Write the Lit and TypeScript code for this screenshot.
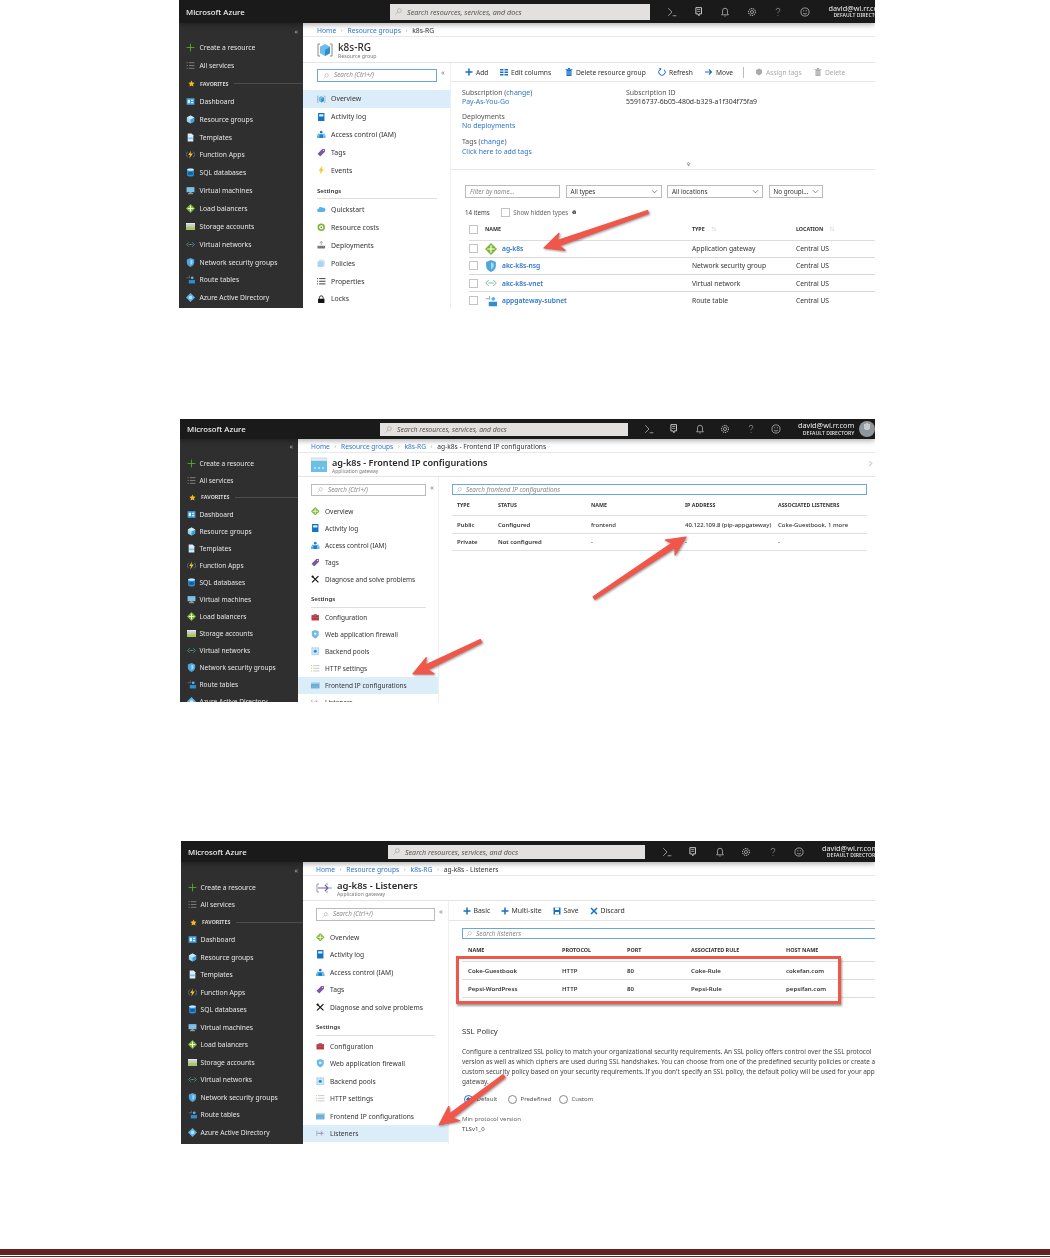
import { LitElement, html, css, svg, nothing } from "lit";
import { customElement, property } from "lit/decorators.js";

const ICONS: Record<string, any> = {
  plus: svg`<path d="M8 1v14M1 8h14" stroke="#5db82c" stroke-width="1.4" fill="none"/>`,
  list: svg`<path d="M1 3h2M1 8h2M1 13h2" stroke="#8a8a8a" stroke-width="1.5"/><path d="M5 3h10M5 8h10M5 13h10" stroke="#8a8a8a" stroke-width="1.5"/>`,
  star: svg`<path d="M8 1l2.2 4.6 5 .7-3.6 3.5.9 5L8 12.4l-4.5 2.4.9-5L.8 6.3l5-.7z" fill="#f5b921"/>`,
  dash: svg`<rect x="1" y="2" width="14" height="12" fill="#3b9ad9"/><path d="M3 5h4v6H3zM9 5h4v2H9zM9 9h4v2H9z" fill="#e8f4fc"/>`,
  cube: svg`<path d="M8 1l6.5 3.5v7L8 15l-6.5-3.5v-7z" fill="#9fd6ef"/><path d="M8 8l6.5-3.5v7L8 15z" fill="#3e9fd8"/><path d="M8 8L1.500 4.500 8 1l6.500 3.500z" fill="#c6e9f8"/>`,
  cubeo: svg`<path d="M3 2H1v12h2M13 2h2v12h-2" stroke="#8a8a8a" fill="none"/><path d="M8 2l5 2.800v6.400L8 14l-5-2.800V4.800z" fill="#6dbde8"/><path d="M8 8l5-3.200v6.400L8 14z" fill="#2f8fce"/>`,
  doc: svg`<path d="M3 1h7l3 3v11H3z" fill="#d9eefa"/><path d="M4 8h8v3H4z" fill="#7fc0e8"/>`,
  fn: svg`<path d="M3 3L0 8l3 5M13 3l3 5-3 5" stroke="#5aa6dc" fill="none"/><path d="M9 1L4 9h3l-1 6 6-9H8z" fill="#f7c325"/>`,
  sql: svg`<path d="M2 3c0-3 12-3 12 0v10c0 3-12 3-12 0z" fill="#2f8ed0"/><ellipse cx="8" cy="3" rx="6" ry="2" fill="#cfe9f8"/><rect x="4" y="7" width="8" height="5" fill="#0f5f9e"/>`,
  vm: svg`<rect x="1" y="2" width="14" height="9" fill="#7cc0e6"/><rect x="6" y="11" width="4" height="2" fill="#aaa"/><rect x="3.500" y="13" width="9" height="1.500" fill="#bbb"/>`,
  lb: svg`<path d="M8 0l8 8-8 8-8-8z" fill="#7cb82f"/><path d="M8 3v10M3 8h10" stroke="#fff" stroke-width="1.600"/>`,
  storage: svg`<rect x="0" y="2" width="16" height="12" fill="#c7c7c7"/><rect x="0" y="9" width="16" height="5" fill="#a8c956"/><rect x="0" y="2" width="16" height="2" fill="#eee"/>`,
  vnet: svg`<path d="M5 4L1 8l4 4M11 4l4 4-4 4" stroke="#55aee0" stroke-width="1.200" fill="none"/><circle cx="5.500" cy="8" r="1" fill="#7cc040"/><circle cx="8" cy="8" r="1" fill="#7cc040"/><circle cx="10.500" cy="8" r="1" fill="#7cc040"/>`,
  shield: svg`<path d="M8 0l6.500 2.500V8c0 4-3 6.500-6.500 8-3.500-1.500-6.500-4-6.500-8V2.500z" fill="#4ea6dc"/><path d="M8 3l3.500 1.500V8c0 2-1.500 3.500-3.500 4.500z" fill="#a9d9f3"/>`,
  route: svg`<path d="M1 5h5M6 1v5" stroke="#888" fill="none"/><circle cx="11" cy="5" r="2.500" fill="#59b4e6"/><path d="M5 15V9h11v6z" fill="#2f8ed0"/>`,
  aad: svg`<path d="M8 0l8 8-8 8-8-8z" fill="#5db3e8"/><circle cx="8" cy="8" r="3" fill="#bfe4fa"/>`,
  book: svg`<rect x="2" y="0" width="12" height="16" fill="#1373c4"/><rect x="4" y="2.500" width="8" height="4" fill="#e8f4fc"/>`,
  iam: svg`<circle cx="8" cy="4" r="2.500" fill="#1d7fc9"/><path d="M4 15V8h8v7z" fill="#1d7fc9"/><circle cx="3" cy="8" r="1.600" fill="#59b4e6"/><path d="M0 15v-5h4v5z" fill="#59b4e6"/><circle cx="13" cy="8" r="1.600" fill="#59b4e6"/><path d="M12 15v-5h4v5z" fill="#59b4e6"/>`,
  tag: svg`<path d="M1 11L10 2h5v5l-9 9z" fill="#7d55a5"/><circle cx="12.500" cy="4.500" r="1" fill="#fff"/>`,
  bolt: svg`<path d="M10 0L3 9h4l-2 7 8-10H9z" fill="#f7c325"/>`,
  cloud: svg`<path d="M3 13a3 3 0 010-6 4 4 0 017-2 3.500 3.500 0 013 8z" fill="#59b4e6"/>`,
  cost: svg`<circle cx="8" cy="8" r="5.500" fill="none" stroke="#7cb82f" stroke-width="3"/><circle cx="8" cy="8" r="1.500" fill="#555"/>`,
  deploy: svg`<path d="M1 9h14v5H1z" fill="#666"/><path d="M3 11h2M7 11h2M11 11h2" stroke="#fff"/><path d="M8 1v7M5 4l3-3 3 3" stroke="#666" fill="none"/>`,
  policy: svg`<path d="M4 1h8l3 3v9H4z" fill="#cfe7f7"/><path d="M1 4h9l2 2v9H1z" fill="#a8d5f1"/>`,
  props: svg`<path d="M0 3h2M0 8h2M0 13h2M4 3h12M4 8h12M4 13h12" stroke="#111" stroke-width="1.500"/>`,
  lock: svg`<rect x="2" y="7" width="12" height="8" fill="#111"/><path d="M4.500 7V5a3.500 3.500 0 017 0v2" stroke="#111" stroke-width="1.600" fill="none"/>`,
  wrench: svg`<path d="M2 2l12 12M14 2L2 14" stroke="#111" stroke-width="2.200"/><circle cx="3" cy="3" r="2" fill="#111"/>`,
  box: svg`<rect x="1" y="4" width="14" height="10" fill="#c8323a"/><rect x="5" y="2" width="6" height="2" fill="#777"/><rect x="1" y="8" width="14" height="1.500" fill="#777"/>`,
  waf: svg`<path d="M8 0l6.500 2.500V8c0 4-3 6.500-6.500 8-3.500-1.500-6.500-4-6.500-8V2.500z" fill="#6fbbe6"/><circle cx="8" cy="7" r="2.500" fill="#dff1fb"/>`,
  pool: svg`<rect x="1.500" y="1.500" width="13" height="13" fill="#cfe7f7" stroke="#59a7dc" stroke-dasharray="2 1"/><circle cx="8" cy="8" r="3" fill="#2f8ed0"/>`,
  http: svg`<path d="M0 3h2M0 8h2M0 13h2" stroke="#a8c956" stroke-width="1.500"/><path d="M4 3h12M4 8h12M4 13h12" stroke="#bbb" stroke-width="1.500"/>`,
  fe: svg`<rect x="0" y="2" width="16" height="12" fill="#6aaed8"/><rect x="0" y="2" width="16" height="3" fill="#b8dcf2"/><path d="M3 11h1M7 11h1M11 11h1" stroke="#fff"/>`,
  feb: svg`<rect x="0" y="1" width="16" height="14" fill="#6cc0e8"/><rect x="0" y="1" width="16" height="3" fill="#dff1fb" stroke="#9aa" stroke-width=".4"/><path d="M3 11h2M7 11h2M11 11h2" stroke="#fff"/>`,
  listen: svg`<path d="M3 4H1v8h2M10 4h2M10 12h2" stroke="#999" fill="none"/><path d="M2 8h10M9 5l3 3-3 3" stroke="#7d55a5" fill="none" stroke-width="1.200"/><path d="M12 8h4" stroke="#59b4e6"/>`,
  add: svg`<path d="M8 1v14M1 8h14" stroke="#1470c8" stroke-width="3"/>`,
  cols: svg`<path d="M0 2h7v3H0zM9 2h7v3H9zM0 7h7v3H0zM9 7h7v3H9zM0 12h7v3H0zM9 12h7v3H9z" fill="#1470c8"/>`,
  trash: svg`<path d="M3 4h10v12H3z" fill="#1470c8"/><path d="M1 2h14v1.500H1zM6 0h4v2H6z" fill="#1470c8"/><path d="M6 6v8M10 6v8" stroke="#fff"/>`,
  trashg: svg`<path d="M3 4h10v12H3z" fill="#aaa"/><path d="M1 2h14v1.500H1zM6 0h4v2H6z" fill="#aaa"/><path d="M6 6v8M10 6v8" stroke="#fff"/>`,
  refresh: svg`<path d="M12.500 3.500A6.500 6.500 0 114 3" stroke="#1470c8" stroke-width="2" fill="none"/><path d="M1.500 0l5 .5-.5 5z" fill="#1470c8"/>`,
  move: svg`<path d="M0 8h13M8 3l5 5-5 5" stroke="#1470c8" stroke-width="2.200" fill="none"/>`,
  tagg: svg`<path d="M8 1l6 3v7l-6 4-6-4V4z" fill="#aaa"/>`,
  save: svg`<path d="M1 1h14v14H1z" fill="#1470c8"/><path d="M4 1h8v5H4z" fill="#fff"/><path d="M4 10h8v5H4z" fill="#fff"/>`,
  x: svg`<path d="M2 2l12 12M14 2L2 14" stroke="#1470c8" stroke-width="3"/>`,
  term: svg`<path d="M2 2l6 6-6 6M9 14h6" stroke="#ddd" fill="none"/>`,
  fb: svg`<path d="M3 1h9v10H8v3l-2-3H3z" fill="none" stroke="#ddd" stroke-width="1.400"/><path d="M5 4h5M5 7h5" stroke="#ddd"/>`,
  bell: svg`<path d="M4 11V6a4 4 0 018 0v5l1.500 1.500h-11zM7 14.500h2" fill="none" stroke="#ddd"/>`,
  gear: svg`<circle cx="8" cy="8" r="2.500" fill="none" stroke="#ddd"/><circle cx="8" cy="8" r="5.500" fill="none" stroke="#ddd" stroke-width="1.600" stroke-dasharray="2 1.300"/>`,
  help: svg`<path d="M5 5a3 3 0 116 0c0 2-3 2.500-3 5M8 13v1.500" fill="none" stroke="#aaa"/>`,
  smile: svg`<circle cx="8" cy="8" r="6.500" fill="none" stroke="#ddd"/><path d="M5 10c1.500 1.500 4.500 1.500 6 0" stroke="#ddd" fill="none"/><circle cx="6" cy="6" r=".8" fill="#ddd"/><circle cx="10" cy="6" r=".8" fill="#ddd"/>`,
  search: svg`<circle cx="10" cy="6" r="4.500" fill="none" stroke="#888"/><path d="M6.500 9.500L1 15" stroke="#888"/>`,
  down: svg`<path d="M2 5l6 6 6-6" fill="none" stroke="#444" stroke-width="1.400"/>`,
  sort: svg`<path d="M5 14V3M2 6l3-3 3 3M11 2v11M8 10l3 3 3-3" fill="none" stroke="#bbb"/>`,
  info: svg`<circle cx="8" cy="8" r="7" fill="#555"/><path d="M8 7v5M8 4v1.500" stroke="#fff" stroke-width="1.600"/>`,
  caret: svg`<path d="M8 2l5 6H9v6H7V8H3z" fill="none" stroke="#666" stroke-width="1.500"/>`,
  right: svg`<path d="M5 2l6 6-6 6" fill="none" stroke="#555"/>`,
};

const ic = (n: string) => html`<svg class="ic" viewBox="0 0 16 16" aria-hidden="true">${ICONS[n]}</svg>`;

const NAV: [string, string][] = [
  ["dash", "Dashboard"], ["cube", "Resource groups"], ["doc", "Templates"], ["fn", "Function Apps"],
  ["sql", "SQL databases"], ["vm", "Virtual machines"], ["lb", "Load balancers"], ["storage", "Storage accounts"],
  ["vnet", "Virtual networks"], ["shield", "Network security groups"], ["route", "Route tables"], ["aad", "Azure Active Directory"],
];

type Arrow = [number, number, number, number];

function arrowPoints([x0, y0, x1, y1]: Arrow): string {
  const len = Math.hypot(x1 - x0, y1 - y0);
  const ux = (x1 - x0) / len, uy = (y1 - y0) / len;
  const nx = -uy, ny = ux;
  const head = 19, hw = 9, neck = 2.6, tail = 1.6;
  const bx = x1 - ux * head, by = y1 - uy * head;
  const nkx = x1 - ux * (head - 4), nky = y1 - uy * (head - 4);
  const p = [
    [x0 + nx * tail, y0 + ny * tail],
    [nkx + nx * neck, nky + ny * neck],
    [bx + nx * hw, by + ny * hw],
    [x1, y1],
    [bx - nx * hw, by - ny * hw],
    [nkx - nx * neck, nky - ny * neck],
    [x0 - nx * tail, y0 - ny * tail],
  ];
  return p.map((q) => q.map((v) => v.toFixed(1)).join(",")).join(" ");
}

@customElement("az-shell")
class AzShell extends LitElement {
  @property() variant = "s1";
  @property({ type: Array }) crumbs: string[] = [];
  @property() heading = "";
  @property() sub = "";
  @property() headIcon = "cubeo";
  @property({ type: Array }) menu: [string, string, boolean?][] = [];
  @property({ type: Array }) settings: [string, string, boolean?][] = [];
  @property({ type: Boolean }) avatar = false;
  @property({ type: Boolean }) closer = false;
  @property() user = "";
  @property() dir = "";
  @property({ type: Array }) arrows: Arrow[] = [];
  @property({ type: Array }) origin: number[] = [0, 0];

  static styles = css`
    :host { display: block; font-family: "Noto Sans", "Open Sans", sans-serif; color: #333; }
    .ic { width: 100%; height: 100%; display: block; }
    .shot { position: relative; overflow: hidden; height: var(--h); display: grid; grid-template-columns: var(--side) 1fr; grid-template-rows: var(--bar) 1fr; background: #fff; filter: blur(.28px); }
    .s1 { --h: 308px; --bar: 23px; --side: 124px; --r: 17.85px; --top: 16px; --brand: 211px; --sw: 260px; --ig: 26.5px; --il: 17px; --ul: 19px; --crumb: 14px; --ttl: 26px; --menu: 148px; --m: 17.85px; --sr: 13px; --st: 6px; --sa: 8px; --sx: 120px; --pl: 14px; --nf: 6.750px; --ng: 4.500px; --mf: 6.900px; --tf: 10px; --subf: 5.200px; --gf: 7.200px; --cf: 6.750px; }
    .s2 { --h: 283px; --bar: 20px; --side: 118px; --r: 17px; --top: 15.5px; --brand: 200px; --sw: 248px; --ig: 25.4px; --il: 16px; --ul: 17px; --crumb: 14px; --ttl: 24px; --menu: 141px; --m: 17px; --sr: 12px; --st: 7px; --sa: 6.500px; --sx: 115px; --pl: 13px; --nf: 6.600px; --ng: 3.500px; --mf: 6.500px; --tf: 9.100px; --subf: 4.900px; --gf: 6.900px; --cf: 6.600px; }
    .s3 { --h: 303px; --bar: 21px; --side: 122px; --r: 17.500px; --top: 16.250px; --brand: 207px; --sw: 257px; --ig: 26.4px; --il: 17px; --ul: 18px; --crumb: 14px; --ttl: 25px; --menu: 146px; --m: 17.500px; --sr: 13px; --st: 7px; --sa: 7.250px; --sx: 119px; --pl: 13px; --nf: 6.700px; --ng: 3.500px; --mf: 6.700px; --tf: 9.500px; --subf: 5.100px; --gf: 7.100px; --cf: 6.700px; }
    .bar { grid-column: 1 / 3; background: #1a1a1a; display: flex; align-items: center; color: #eee; white-space: nowrap; overflow: hidden; box-shadow: 0 2px 5px rgba(0,0,0,.3); z-index: 2; }
    .brand { width: var(--brand); box-sizing: border-box; padding-left: 7px; font-size: 7.800px; font-weight: 500; color: #f2f2f2; flex: none; }
    .gs { width: var(--sw); flex: none; height: calc(var(--bar) - 7px); background: #e3e1df; display: flex; align-items: center; padding-left: 5px; box-sizing: border-box; font-style: italic; font-size: var(--gf); color: #555; gap: 5px; }
    .gs .si { width: 7px; height: 7px; flex: none; }
    .tools { display: flex; gap: calc(var(--ig) - 10px); margin-left: var(--il); flex: none; }
    .tools span { width: 10px; height: 10px; display: block; }
    .user { margin-left: var(--ul); line-height: 1; text-align: right; flex: none; }
    .user b { display: block; font-weight: 400; font-size: 7.300px; }
    .user i { display: block; font-style: normal; font-weight: 600; font-size: 5.100px; margin-top: 1px; color: #ddd; }
    .ava { width: 16px; height: 16px; border-radius: 50%; margin-left: 5px; background: radial-gradient(circle at 50% 36%, #c4c9cd 0 26%, #90979c 27%); flex: none; }

    .side { background: #2f2f2f; color: #e6e6e6; font-size: var(--nf); overflow: hidden; }
    .col { height: var(--top); display: flex; align-items: center; justify-content: flex-end; padding-right: 5px; color: #aaa; font-size: 7px; }
    .nav { height: var(--r); display: flex; align-items: center; padding-left: 7px; gap: var(--ng); white-space: nowrap; }
    .nav .i { width: 9px; height: 9px; flex: none; }
    .fav { height: var(--r); display: flex; align-items: center; padding-left: 8.500px; gap: 5.500px; font-size: 5.300px; font-weight: 700; color: #d6d6d6; }
    .fav .i { width: 7px; height: 7px; flex: none; }
    .fav::after { content: ""; flex: 1; height: 1px; background: #4c4c4c; }

    .main { display: grid; grid-template-rows: var(--crumb) var(--ttl) 1fr; min-width: 0; min-height: 0; overflow: hidden; }
    .crumbs { border-bottom: 1px solid #e8e8e8; display: flex; align-items: center; gap: 4.800px; padding: 1px 0 0 var(--pl); font-size: var(--cf); white-space: nowrap; box-sizing: border-box; }
    .crumbs a { color: #2f76cf; }
    .crumbs s { text-decoration: none; color: #999; font-size: 5.500px; }
    .ttl { position: relative; display: flex; align-items: center; gap: 5px; padding-left: var(--pl); border-bottom: 1px solid #e4e4e4; box-sizing: border-box; }
    .ttl .hi { width: 16px; height: 16px; flex: none; }
    .ttl h1 { margin: 1px 0 0; font-size: var(--tf); line-height: 11px; font-weight: 600; color: #2a2a2a; white-space: nowrap; }
    .s1 .ttl h1 { font-weight: 500; }
    .ttl small { display: block; font-size: var(--subf); line-height: 6px; color: #777; }
    .close { position: absolute; right: 1px; top: 6px; width: 7px; height: 9px; }
    .blade { display: grid; grid-template-columns: var(--menu) 1fr; min-height: 0; overflow: hidden; }
    .menu { border-right: 1px solid #efefef; font-size: var(--mf); overflow: hidden; min-width: 0; }
    .msearch { display: flex; align-items: flex-start; margin: var(--st) 0 var(--sa) var(--pl); gap: 4px; color: #777; line-height: 1; font-size: 7.500px; }
    .msb { width: var(--sx); height: var(--sr); border: 1px solid #bbb; box-sizing: border-box; display: flex; align-items: center; padding-left: 5px; gap: 5px; font-style: italic; font-size: 6.300px; color: #888; }
    .s1 .msb { border-color: #6ba6dd; }
    .msb span { width: 6px; height: 6px; }
    .mi { height: var(--m); display: flex; align-items: center; padding-left: var(--pl); gap: 5.500px; white-space: nowrap; color: #333; }
    .mi .i { width: 8.500px; height: 8.500px; flex: none; }
    .mi.on { background: #dcedfa; }
    .mh { height: 20px; margin: 0 calc(var(--menu) - var(--sx) - var(--pl) - 1px) 1.500px var(--pl); border-bottom: 1px solid #dedede; box-sizing: border-box; display: flex; align-items: flex-end; padding-bottom: 3.500px; font-weight: 600; font-size: 6.100px; color: #333; }
    .content { min-width: 0; overflow: hidden; }
    .arrows { position: absolute; left: 0; top: 0; width: 100%; height: 100%; pointer-events: none; z-index: 3; filter: drop-shadow(1px 1.500px 1px rgba(0,0,0,.4)); overflow: visible; }
    .arrows polygon { fill: #f0574a; stroke: #f0574a; stroke-width: 1.200; stroke-linejoin: round; }
  `;

  render() {
    const row = ([i, t, on]: [string, string, boolean?]) =>
      html`<div class="mi ${on ? "on" : ""}"><span class="i">${ic(i)}</span>${t}</div>`;
    const [ox, oy] = this.origin;
    return html`<div class="shot ${this.variant}">
      <header class="bar">
        <div class="brand">Microsoft Azure</div>
        <div class="gs"><span class="si">${ic("search")}</span>Search resources, services, and docs</div>
        <div class="tools">${["term", "fb", "bell", "gear", "help", "smile"].map((n) => html`<span>${ic(n)}</span>`)}</div>
        <div class="user"><b>${this.user}</b><i>${this.dir}</i></div>
        ${this.avatar ? html`<div class="ava"></div>` : nothing}
      </header>
      <aside class="side">
        <div class="col">«</div>
        <div class="nav"><span class="i">${ic("plus")}</span>Create a resource</div>
        <div class="nav"><span class="i">${ic("list")}</span>All services</div>
        <div class="fav"><span class="i">${ic("star")}</span>FAVORITES</div>
        ${NAV.map(([i, t]) => html`<div class="nav"><span class="i">${ic(i)}</span>${t}</div>`)}
      </aside>
      <main class="main">
        <nav class="crumbs">${this.crumbs.map((c, n) =>
          n < this.crumbs.length - 1 ? html`<a>${c}</a><s>›</s>` : html`<span>${c}</span>`)}</nav>
        <div class="ttl">
          <span class="hi">${ic(this.headIcon)}</span>
          <div><h1>${this.heading}</h1><small>${this.sub}</small></div>
          ${this.closer ? html`<span class="close">${ic("right")}</span>` : nothing}
        </div>
        <div class="blade">
          <div class="menu">
            <div class="msearch"><div class="msb"><span>${ic("search")}</span>Search (Ctrl+/)</div>«</div>
            ${this.menu.map(row)}
            <div class="mh">Settings</div>
            ${this.settings.map(row)}
          </div>
          <div class="content"><slot></slot></div>
        </div>
      </main>
      <svg class="arrows" aria-hidden="true">
        ${this.arrows.map(([a, b, c, d]) => svg`<polygon points=${arrowPoints([a - ox, b - oy, c - ox, d - oy])}></polygon>`)}
      </svg>
      <slot name="over"></slot>
    </div>`;
  }
}

@customElement("app-root")
export class AppRoot extends LitElement {
  static styles = css`
    :host { display: block; width: 1050px; height: 1258px; overflow: hidden; background: #fff; font-family: "Noto Sans", "Open Sans", sans-serif; color: #333; }
    .ic { width: 100%; height: 100%; display: block; }
    .w1 { margin-left: 179px; width: 696px; }
    .w2 { margin: 111px 0 0 180px; width: 695px; }
    .w3 { margin: 139px 0 0 181px; width: 694px; }
    .foot { margin-top: 105px; height: 6px; background: #622423; }
    .foot2 { margin-top: 1px; height: 1px; background: #622423; }

    a { color: #2f76cf; }
    .tb { height: 19px; display: grid; align-items: center; border-bottom: 1px solid #e6e6e6; box-sizing: border-box; font-size: 6.650px; white-space: nowrap; padding-left: 14px; }
    .tb1 { grid-template-columns: 35px 65px 93px 47px 38px 12px 59px auto; }
    .tb3 { grid-template-columns: 38px 52px 37px auto; padding-left: 13.500px; height: 20px; font-size: 6.900px; }
    .t { display: flex; align-items: center; gap: 3px; }
    .t span { width: 8px; height: 8px; flex: none; }
    .t.dim { color: #aaa; }
    .sep { width: 1px; height: 11px; background: #bbb; }

    .ess { position: relative; height: 88px; border-bottom: 1px solid #e6e6e6; box-sizing: border-box; display: grid; grid-template-columns: 164px 1fr; padding: 6px 0 0 11px; font-size: 6.900px; line-height: 9.200px; color: #555; white-space: nowrap; }
    .ess p { margin: 0 0 5.500px; }
    .ess p + p + p { margin-top: 7px; }
    .ess .val { display: block; }
    .ess span.val { color: #333; }
    .caret { position: absolute; left: 235px; top: 79px; width: 5px; height: 6px; }

    .filters { display: flex; gap: 5.500px; margin: 15px 0 0 14px; height: 13px; font-size: 6.300px; }
    .sel { box-sizing: border-box; height: 13px; border: 1px solid #bbb; display: flex; align-items: center; justify-content: space-between; padding: 0 3px 0 4px; white-space: nowrap; color: #333; }
    .sel span { width: 7px; height: 7px; }
    .sel.fn { width: 95px; font-style: italic; color: #888; }
    .sel.w { width: 96px; }
    .sel.g { width: 54px; }
    .count { display: flex; align-items: center; gap: 11px; margin: 7px 0 0 14px; height: 14px; font-size: 6.200px; color: #444; white-space: nowrap; }
    .count > div { display: flex; align-items: center; gap: 3.500px; color: #666; }
    .count em { font-style: normal; width: 4.500px; height: 4.500px; display: block; }
    .cb { display: block; width: 9px; height: 9px; border: 1px solid #c4c4c4; box-sizing: border-box; background: #fff; flex: none; }

    .r1 { display: grid; grid-template-columns: 16px 17px 190px 104px 1fr; align-items: center; margin-left: 18px; font-size: 6.700px; white-space: nowrap; border-bottom: 1px solid #d8d8d8; box-sizing: border-box; height: 17.300px; }
    .r1.h { height: 21.500px; font-size: 5.300px; font-weight: 700; color: #333; border-color: #ddd; }
    .r1 .ri { width: 12px; height: 12px; }
    .r1 .hn { display: flex; align-items: center; gap: 6px; }
    .r1 .hn i { width: 6px; height: 6px; display: block; }
    .r1 a { font-weight: 600; }

    .fs { margin: 7px 0 0 13px; width: 415px; height: 11px; box-sizing: border-box; border: 1px solid #6ba6dd; display: flex; align-items: center; padding-left: 3px; gap: 4px; font-size: 6.300px; font-style: italic; color: #888; white-space: nowrap; }
    .fs span { width: 6px; height: 6px; flex: none; }
    .r2 { display: grid; grid-template-columns: 41px 93px 94px 93px 1fr; align-items: center; margin-left: 13px; width: 415px; padding-left: 5px; box-sizing: border-box; border-bottom: 1px solid #e0e0e0; height: 18px; font-size: 5.950px; font-weight: 600; white-space: nowrap; color: #333; }
    .r2.h { height: 21px; font-size: 5.300px; font-weight: 700; }
    .r2 .ip { font-weight: 500; }
    .r2:last-child { height: 17px; }

    .fs3 { margin: 7px 0 0 13px; height: 11px; box-sizing: border-box; border: 1px solid #6ba6dd; border-right: 0; display: flex; align-items: center; padding-left: 3px; gap: 4px; font-size: 6.500px; font-style: italic; color: #888; }
    .fs3 span { width: 6px; height: 6px; flex: none; }
    .r3 { display: grid; grid-template-columns: 94px 65px 64px 95px 1fr; align-items: center; margin-left: 13px; padding-left: 6px; border-bottom: 1px solid #ddd; box-sizing: border-box; height: 18px; font-size: 6.100px; font-weight: 600; white-space: nowrap; color: #333; }
    .r3.h { height: 23px; font-size: 5.450px; font-weight: 700; }
    .ssl { margin: 27px 0 0 13px; white-space: nowrap; font-size: 6.450px; line-height: 10px; color: #444; position: relative; }
    .ssl h2 { margin: 0 0 10px; font-size: 7.800px; line-height: 12px; font-weight: 400; color: #333; }
    .ssl p { margin: 0; }
    .radios { display: flex; align-items: center; margin: 7px 0 0 2px; height: 10px; font-size: 6px; color: #555; }
    .radio { display: flex; align-items: center; gap: 3.500px; }
    .radio b { display: block; width: 9px; height: 9px; border: 1px solid #888; border-radius: 50%; box-sizing: border-box; }
    .radio b.on { border-color: #1470c8; background: radial-gradient(circle, #1470c8 0 40%, #fff 45%); }
    .radio.a { width: 44px; } .radio.b { width: 51px; }
    .ver { margin-top: 10px; font-size: 6.100px; color: #666; }
    .ver + div { font-size: 6.100px; color: #444; }
    .box { position: absolute; left: 275px; top: 115px; width: 385px; height: 48px; box-sizing: border-box; border: 3px solid #f0574a; box-shadow: 1px 1.500px 2px rgba(0,0,0,.4); pointer-events: none; z-index: 3; }
  `;

  render() {
    const base1: [string, string, boolean?][] = [["cubeo", "Overview", true], ["book", "Activity log"], ["iam", "Access control (IAM)"], ["tag", "Tags"], ["bolt", "Events"]];
    const gw: [string, string, boolean?][] = [["lb", "Overview"], ["book", "Activity log"], ["iam", "Access control (IAM)"], ["tag", "Tags"], ["wrench", "Diagnose and solve problems"]];
    const set2: [string, string, boolean?][] = [["box", "Configuration"], ["waf", "Web application firewall"], ["pool", "Backend pools"], ["http", "HTTP settings"], ["fe", "Frontend IP configurations", true], ["listen", "Listeners"]];
    const set3: [string, string, boolean?][] = [["box", "Configuration"], ["waf", "Web application firewall"], ["pool", "Backend pools"], ["http", "HTTP settings"], ["fe", "Frontend IP configurations"], ["listen", "Listeners", true]];
    const res: [string, string, string, string][] = [
      ["lb", "ag-k8s", "Application gateway", "Central US"],
      ["shield", "akc-k8s-nsg", "Network security group", "Central US"],
      ["vnet", "akc-k8s-vnet", "Virtual network", "Central US"],
      ["route", "appgateway-subnet", "Route table", "Central US"],
    ];
    return html`
      <div class="w1">
        <az-shell variant="s1" .crumbs=${["Home", "Resource groups", "k8s-RG"]} heading="k8s-RG" sub="Resource group" headIcon="cubeo"
          user="david@wi.rr.com" dir="DEFAULT DIRECTORY"
          .menu=${base1}
          .settings=${[["cloud", "Quickstart"], ["cost", "Resource costs"], ["deploy", "Deployments"], ["policy", "Policies"], ["props", "Properties"], ["lock", "Locks"]]}
          .arrows=${[[648, 212, 544, 248]]} .origin=${[179, 0]}>
          <div class="tb tb1">
            <div class="t"><span>${ic("add")}</span>Add</div>
            <div class="t"><span>${ic("cols")}</span>Edit columns</div>
            <div class="t"><span>${ic("trash")}</span>Delete resource group</div>
            <div class="t"><span>${ic("refresh")}</span>Refresh</div>
            <div class="t"><span>${ic("move")}</span>Move</div>
            <div class="sep"></div>
            <div class="t dim"><span>${ic("tagg")}</span>Assign tags</div>
            <div class="t dim"><span>${ic("trashg")}</span>Delete</div>
          </div>
          <div class="ess">
            <div>
              <p>Subscription (<a>change</a>)<a class="val">Pay-As-You-Go</a></p>
              <p>Deployments<a class="val">No deployments</a></p>
              <p>Tags (<a>change</a>)<a class="val">Click here to add tags</a></p>
            </div>
            <div><p>Subscription ID<span class="val">55916737-6b05-480d-b329-a1f304f75fa9</span></p></div>
            <span class="caret">${ic("caret")}</span>
          </div>
          <div class="filters">
            <div class="sel fn">Filter by name...</div>
            <div class="sel w">All types<span>${ic("down")}</span></div>
            <div class="sel w">All locations<span>${ic("down")}</span></div>
            <div class="sel g">No groupi...<span>${ic("down")}</span></div>
          </div>
          <div class="count">14 items<div><i class="cb"></i>Show hidden types<em>${ic("info")}</em></div></div>
          <div class="r1 h"><i class="cb"></i><span class="hn">NAME<i>${ic("sort")}</i></span><span></span><span class="hn">TYPE<i>${ic("sort")}</i></span><span class="hn">LOCATION<i>${ic("sort")}</i></span></div>
          ${res.map(([i, n, t, l]) => html`<div class="r1"><i class="cb"></i><span class="ri">${ic(i)}</span><a>${n}</a><span>${t}</span><span>${l}</span></div>`)}
        </az-shell>
      </div>

      <div class="w2">
        <az-shell variant="s2" .crumbs=${["Home", "Resource groups", "k8s-RG", "ag-k8s - Frontend IP configurations"]}
          heading="ag-k8s - Frontend IP configurations" sub="Application gateway" headIcon="feb" closer avatar
          user="david@wi.rr.com" dir="DEFAULT DIRECTORY"
          .menu=${gw} .settings=${set2}
          .arrows=${[[594, 598, 686, 537], [481, 641, 413, 674]]} .origin=${[180, 419]}>
          <div class="fs"><span>${ic("search")}</span>Search frontend IP configurations</div>
          <div class="r2 h"><span>TYPE</span><span>STATUS</span><span>NAME</span><span>IP ADDRESS</span><span>ASSOCIATED LISTENERS</span></div>
          <div class="r2"><span>Public</span><span>Configured</span><span class="ip">frontend</span><span class="ip">40.122.109.8 (pip-appgateway)</span><span class="ip">Coke-Guestbook, 1 more</span></div>
          <div class="r2"><span>Private</span><span>Not configured</span><span>-</span><span>-</span><span>-</span></div>
        </az-shell>
      </div>

      <div class="w3">
        <az-shell variant="s3" .crumbs=${["Home", "Resource groups", "k8s-RG", "ag-k8s - Listeners"]}
          heading="ag-k8s - Listeners" sub="Application gateway" headIcon="listen"
          user="david@wi.rr.com" dir="DEFAULT DIRECTORY"
          .menu=${gw} .settings=${set3}
          .arrows=${[[504, 1076, 439, 1125]]} .origin=${[181, 841]}>
          <div class="tb tb3">
            <div class="t"><span>${ic("add")}</span>Basic</div>
            <div class="t"><span>${ic("add")}</span>Multi-site</div>
            <div class="t"><span>${ic("save")}</span>Save</div>
            <div class="t"><span>${ic("x")}</span>Discard</div>
          </div>
          <div class="fs3"><span>${ic("search")}</span>Search listeners</div>
          <div class="r3 h"><span>NAME</span><span>PROTOCOL</span><span>PORT</span><span>ASSOCIATED RULE</span><span>HOST NAME</span></div>
          <div class="r3"><span>Coke-Guestbook</span><span>HTTP</span><span>80</span><span>Coke-Rule</span><span>cokefan.com</span></div>
          <div class="r3"><span>Pepsi-WordPress</span><span>HTTP</span><span>80</span><span>Pepsi-Rule</span><span>pepsifan.com</span></div>
          <div class="ssl">
            <h2>SSL Policy</h2>
            <p>Configure a centralized SSL policy to match your organizational security requirements. An SSL policy offers control over the SSL protocol</p>
            <p>version as well as which ciphers are used during SSL handshakes. You can choose from one of the predefined security policies or create a</p>
            <p>custom security policy based on your security requirements. If you don't specify an SSL policy, the default policy will be used for your application</p>
            <p>gateway.</p>
            <div class="radios">
              <div class="radio a"><b class="on"></b>Default</div>
              <div class="radio b"><b></b>Predefined</div>
              <div class="radio"><b></b>Custom</div>
            </div>
            <div class="ver">Min protocol version</div>
            <div>TLSv1_0</div>
          </div>
          <div slot="over" class="box"></div>
        </az-shell>
      </div>

      <div class="foot"></div>
      <div class="foot2"></div>
    `;
  }
}
